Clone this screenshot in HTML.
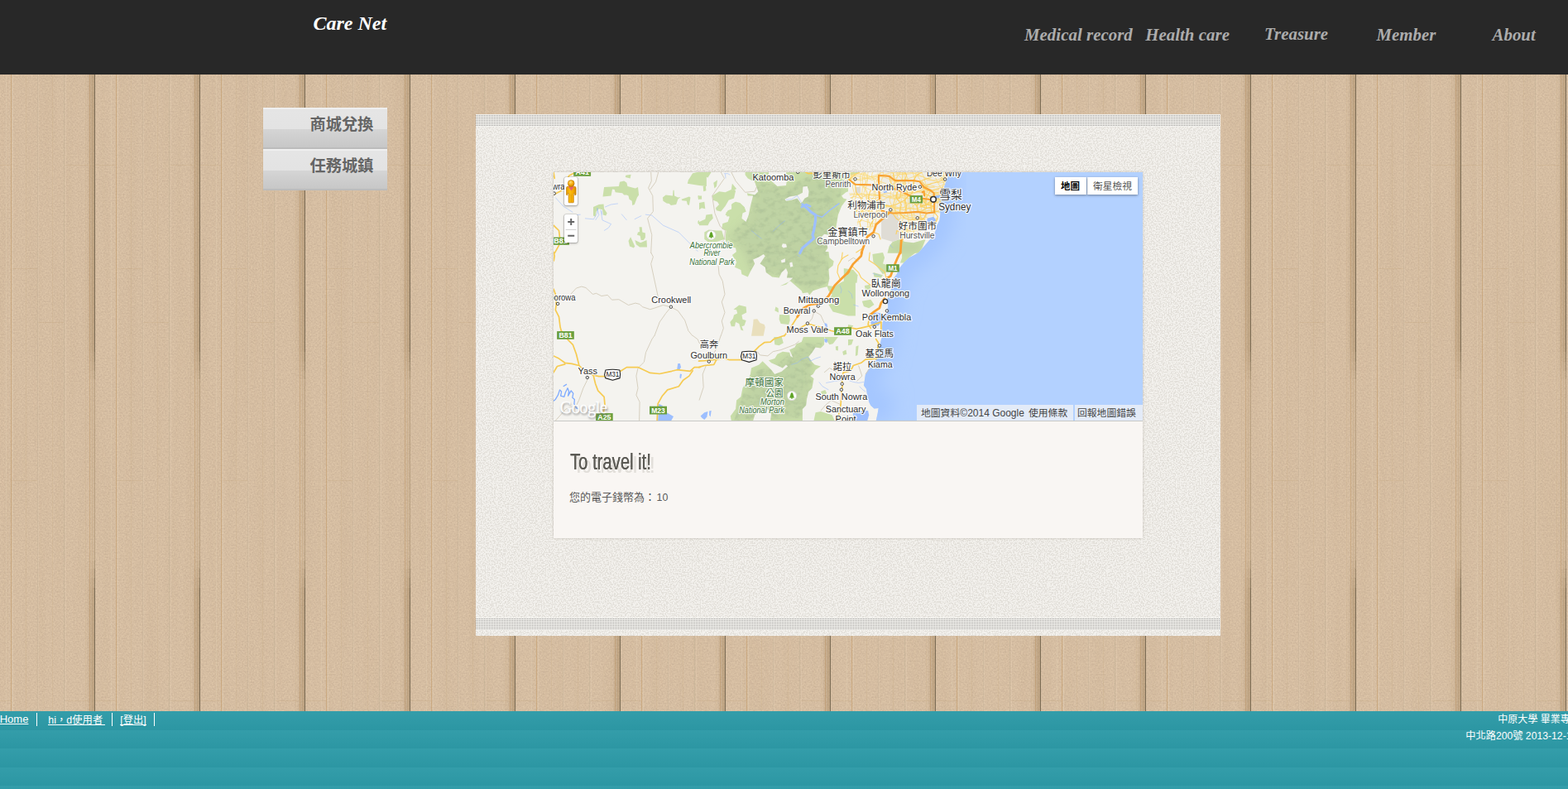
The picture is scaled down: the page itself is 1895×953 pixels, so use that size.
<!DOCTYPE html>
<html lang="zh-Hant">
<head>
<meta charset="utf-8">
<title>Care Net</title>
<style>
*{box-sizing:border-box}
html,body{margin:0;padding:0}
body{width:1895px;height:953px;overflow:hidden;position:relative;background:#d5bea3;font-family:"Liberation Sans",sans-serif;font-size:13px;color:#555}
svg{display:block}
a{color:inherit}
#wood{position:absolute;left:0;top:0;width:1895px;height:953px;z-index:0}
#header{position:absolute;left:0;top:0;width:1895px;height:90px;background:#282828;z-index:2}
#logo{position:absolute;left:378.4px;top:11.7px;margin:0;font:italic bold 24px/32px "Liberation Serif",serif;color:#fff;white-space:nowrap}
#nav a{position:absolute;font:italic bold 20.8px/26px "Liberation Serif",serif;letter-spacing:.06px;color:#acacac;text-decoration:none;white-space:nowrap}
#side{position:absolute;left:318px;top:130px;width:150px;z-index:2;margin:0;padding:0;list-style:none}
#side li{position:relative;height:50px;width:150px;border-top:2px solid #efefef;border-bottom:2px solid #bcbcbc;
 background:linear-gradient(to bottom,#e5e5e5 0,#e3e3e3 24px,#d5d5d5 24px,#c7c7c7 46px)}
#side li svg{position:absolute;left:56px;top:6px}
#panel{position:absolute;left:575px;top:138px;width:900px;height:630px;background:#eeece7;z-index:1;overflow:hidden}
#panel .tex{position:absolute;left:0;top:0}
.dots{position:absolute;left:0;width:900px;height:15px;background-color:#f3f2ee;
 background-image:linear-gradient(90deg,#979593 1px,#f3f2ee 1px),linear-gradient(#f3f2ee,#f3f2ee);background-size:2px 2px,2px 2px}
.dots i{position:absolute;left:0;top:0;width:900px;height:15px;background-image:linear-gradient(#f3f2ee 1px,transparent 1px);background-size:2px 2px;background-position:0 0}
#card{position:absolute;left:669px;top:208px;width:712px;height:442px;background:#f9f6f3;z-index:3;box-shadow:0 0 3px rgba(90,80,60,.28)}
#map{position:relative;width:712px;height:300px;overflow:hidden;border-bottom:1px solid #c9c9c6;box-sizing:content-box;background:#f4f3ef}
.gm{position:absolute;background:#fff;border-radius:2px;box-shadow:0 1px 3px rgba(0,0,0,.3),0 0 0 .6px rgba(0,0,0,.18)}
#mt{position:absolute;left:606px;top:6px;height:21px;display:flex}
#mt div{height:21px;background:#fff;box-shadow:0 1px 3px rgba(0,0,0,.4);position:relative}
#mt svg{position:absolute;top:4px}
.cr{position:absolute;top:281px;height:19px;background:rgba(245,245,245,.72)}
.cr svg{position:absolute;top:3px}
.cr span{position:absolute;top:3px;font-size:12px;line-height:14px;color:#444;white-space:nowrap}
#card h2{position:absolute;left:20.4px;top:334.4px;margin:0;font:normal 27px/32px "Liberation Sans",sans-serif;color:#5b5a54;white-space:nowrap;transform:scaleX(.749);transform-origin:0 0;text-shadow:.3px 0 0 #56554f,5.5px 4px 0 #e2dfda,6px 4px 0 #e2dfda;letter-spacing:0}
#coin{position:absolute;left:19px;top:383px;margin:0;height:18px;white-space:nowrap}
#footer{position:absolute;left:0;top:859px;width:1895px;height:94px;z-index:2;color:#fff;
 background:#2d9aa7;background-image:repeating-linear-gradient(to bottom,rgba(255,255,255,.03) 0,rgba(0,0,0,.025) 22.5px)}
#footer .l{position:absolute;top:2px;height:16px;white-space:nowrap;font-size:13px;line-height:16px;color:#fff;text-decoration:underline}
#footer .sep{position:absolute;top:2px;width:1px;height:16px;background:#fff}
#footer .r{position:absolute;white-space:nowrap;height:16px}
</style>
</head>
<body>

<svg id="wood" width="1895" height="953" viewBox="0 0 1895 953" aria-hidden="true">
<defs>
<filter id="wg" x="0" y="0" width="100%" height="100%" color-interpolation-filters="sRGB"><feTurbulence type="fractalNoise" baseFrequency="0.55" numOctaves="2" seed="7"/><feColorMatrix type="matrix" values="0.12 0 0 0 0.777  0.12 0 0 0 0.683  0.10 0 0 0 0.584  0 0 0 0 1"/></filter>
<filter id="ws" x="0" y="0" width="100%" height="100%" color-interpolation-filters="sRGB"><feTurbulence type="fractalNoise" baseFrequency="0.09 0.004" numOctaves="2" seed="3"/><feColorMatrix type="matrix" values="0 0 0 0 0.50  0 0 0 0 0.36  0 0 0 0 0.20  0 0 0 1.0 -0.42"/></filter>
<linearGradient id="sh" x1="0" y1="0" x2="1" y2="0"><stop offset="0" stop-color="#7f6138" stop-opacity="0"/><stop offset="1" stop-color="#7f6138" stop-opacity=".24"/></linearGradient>
<linearGradient id="shr" x1="0" y1="0" x2="1" y2="0"><stop offset="0" stop-color="#7f6138" stop-opacity=".14"/><stop offset="1" stop-color="#7f6138" stop-opacity="0"/></linearGradient>
<linearGradient id="sh2" x1="0" y1="0" x2="1" y2="0"><stop offset="0" stop-color="#8a6a3c" stop-opacity="0"/><stop offset="1" stop-color="#8a6a3c" stop-opacity=".10"/></linearGradient>
<pattern id="pl" width="127" height="953" patternUnits="userSpaceOnUse" x="-12" y="0">
 <rect x="19" y="0" width="1" height="953" fill="#ead8be" fill-opacity="0.22"/>
 <rect x="25" y="0" width="1" height="953" fill="#c39a68" fill-opacity="0.55"/>
 <rect x="27" y="0" width="1" height="953" fill="#ead8be" fill-opacity="0.3"/>
 <rect x="43" y="0" width="1" height="953" fill="#c7aa84" fill-opacity="0.25"/>
 <rect x="57" y="0" width="1" height="953" fill="#bfae94" fill-opacity="0.35"/>
 <rect x="58" y="0" width="1" height="953" fill="#ead8be" fill-opacity="0.2"/>
 <rect x="75" y="0" width="1" height="953" fill="#c7aa84" fill-opacity="0.25"/>
 <rect x="89" y="0" width="1" height="953" fill="#bfae94" fill-opacity="0.4"/>
 <rect x="91" y="0" width="1" height="953" fill="#ead8be" fill-opacity="0.25"/>
 <rect x="115" y="0" width="1" height="953" fill="#c7aa84" fill-opacity="0.25"/>
 <rect x="120" y="0" width="1" height="953" fill="#c39a68" fill-opacity="0.45"/>
 <rect x="123" y="0" width="1" height="953" fill="#cdb08a" fill-opacity="0.4"/>
 <rect x="117" y="0" width="10" height="953" fill="url(#sh2)"/>
 <rect x="126" y="0" width="1" height="953" fill="#a89070" fill-opacity="0.5"/>
 <rect x="116" y="0" width="10" height="425" fill="url(#sh)" opacity="1"/>
 <rect x="127" y="0" width="5" height="425" fill="url(#shr)" opacity="1"/>
 <rect x="126" y="0" width="1" height="425" fill="#6b5f48" fill-opacity="0.8"/>
 <rect x="116" y="425" width="10" height="12" fill="url(#sh)" opacity="0.75"/>
 <rect x="127" y="425" width="5" height="12" fill="url(#shr)" opacity="0.75"/>
 <rect x="126" y="425" width="1" height="12" fill="#6b5f48" fill-opacity="0.6"/>
 <rect x="116" y="437" width="10" height="11" fill="url(#sh)" opacity="0.5"/>
 <rect x="127" y="437" width="5" height="11" fill="url(#shr)" opacity="0.5"/>
 <rect x="126" y="437" width="1" height="11" fill="#6b5f48" fill-opacity="0.4"/>
 <rect x="116" y="448" width="10" height="10" fill="url(#sh)" opacity="0.25"/>
 <rect x="127" y="448" width="5" height="10" fill="url(#shr)" opacity="0.25"/>
 <rect x="126" y="448" width="1" height="10" fill="#6b5f48" fill-opacity="0.2"/>
 <rect x="116" y="677" width="10" height="10" fill="url(#sh)" opacity="0.25"/>
 <rect x="127" y="677" width="5" height="10" fill="url(#shr)" opacity="0.25"/>
 <rect x="126" y="677" width="1" height="10" fill="#6b5f48" fill-opacity="0.2"/>
 <rect x="116" y="687" width="10" height="11" fill="url(#sh)" opacity="0.5"/>
 <rect x="127" y="687" width="5" height="11" fill="url(#shr)" opacity="0.5"/>
 <rect x="126" y="687" width="1" height="11" fill="#6b5f48" fill-opacity="0.4"/>
 <rect x="116" y="698" width="10" height="12" fill="url(#sh)" opacity="0.75"/>
 <rect x="127" y="698" width="5" height="12" fill="url(#shr)" opacity="0.75"/>
 <rect x="126" y="698" width="1" height="12" fill="#6b5f48" fill-opacity="0.6"/>
 <rect x="116" y="710" width="10" height="243" fill="url(#sh)" opacity="1"/>
 <rect x="127" y="710" width="5" height="243" fill="url(#shr)" opacity="1"/>
 <rect x="126" y="710" width="1" height="243" fill="#6b5f48" fill-opacity="0.8"/>
 <rect x="0" y="199" width="25" height="1" fill="#c4a67e" fill-opacity="0.3"/>
 <rect x="91" y="199" width="28" height="1" fill="#c4a67e" fill-opacity="0.3"/>
 <rect x="27" y="324" width="30" height="1" fill="#c4a67e" fill-opacity="0.3"/>
 <rect x="58" y="389" width="31" height="1" fill="#c4a67e" fill-opacity="0.3"/>
 <rect x="27" y="580" width="30" height="1" fill="#c4a67e" fill-opacity="0.3"/>
 <rect x="0" y="846" width="25" height="1" fill="#c4a67e" fill-opacity="0.3"/>
 <rect x="91" y="846" width="28" height="1" fill="#c4a67e" fill-opacity="0.3"/>
</pattern></defs>
<rect x="0" y="80" width="1895" height="790" filter="url(#wg)"/>
<rect x="0" y="80" width="1895" height="790" filter="url(#ws)" opacity=".07"/>
<rect x="0" y="80" width="1895" height="790" fill="url(#pl)"/>
</svg>
<div id="header"><h1 id="logo">Care Net</h1><div id="nav">
<a href="#" style="left:1238px;top:29.1px">Medical record</a>
<a href="#" style="left:1384.2px;top:29.1px">Health care</a>
<a href="#" style="left:1528px;top:28.1px">Treasure</a>
<a href="#" style="left:1663.5px;top:29.2px">Member</a>
<a href="#" style="left:1803.5px;top:29.1px">About</a>
</div></div>
<ul id="side">
<li><svg class="" width="80" height="26" viewBox="0 0 80 26" role="img" aria-label="商城兌換"><title>商城兌換</title><text x="0.5" y="18.8" font-family="'Liberation Sans','Noto Sans CJK TC',sans-serif" font-size="19.2" font-weight="bold" fill="#656565" textLength="76.8" lengthAdjust="spacingAndGlyphs">商城兌換</text></svg></li>
<li><svg class="" width="80" height="26" viewBox="0 0 80 26" role="img" aria-label="任務城鎮"><title>任務城鎮</title><text x="0.5" y="18.8" font-family="'Liberation Sans','Noto Sans CJK TC',sans-serif" font-size="19.2" font-weight="bold" fill="#656565" textLength="76.8" lengthAdjust="spacingAndGlyphs">任務城鎮</text></svg></li>
</ul>
<div id="panel">
<svg class="tex" width="900" height="630" aria-hidden="true"><defs><filter id="pn" x="0" y="0" width="100%" height="100%" color-interpolation-filters="sRGB"><feTurbulence type="fractalNoise" baseFrequency="0.62" numOctaves="1" seed="5"/><feColorMatrix type="matrix" values="0 0 0 0 0.890  0 0 0 0 0.878  0 0 0 0 0.855  0 0 0 9 -4.15"/></filter></defs>
<rect width="900" height="630" fill="#f3f1ed"/><rect width="900" height="630" filter="url(#pn)"/></svg>
<div class="dots" style="top:0"><i></i></div>
<div class="dots" style="top:608px"><i></i></div>
</div>
<div id="card"><div id="map">
<svg class="mapsvg" width="712" height="300" viewBox="0 0 712 300" role="img" aria-label="Google map of the Sydney region, New South Wales">
<defs><clipPath id="mc"><rect width="712" height="300"/></clipPath>
<clipPath id="sc"><path d="M478 -0.4 L475.9 7.5 L472.7 15.9 L470.7 24.3 L467.5 31.6 L465.4 39 L467.5 49.5 L466.5 57.9 L463.3 64.2 L461.2 72.6 L456 79.9 L450.7 86.2 L444.4 93.6 L441.3 97 L433.7 101.2 L429.5 103.3 L423.2 109.6 L417.9 115.9 L414.8 123.2 L410.6 128.5 L408.5 141.1 L405.3 146.3 L403.2 155.8 L404.3 162.1 L402.2 170.5 L398 178.9 L396.9 187.3 L398 197 L395.9 202 L394.8 208.3 L391.7 213.5 L390.6 225.1 L383.3 233.5 L380.1 238.7 L377 244 L375.9 251.3 L374.9 257.6 L378 261.8 L379.1 269.2 L381.2 277.6 L383.3 281.8 L387.5 285.4 L392.7 284.9 L391.7 291.2 L389.6 300.7 L389.6 320 L760 320 L760 -20 L478 -20Z"/></clipPath>
<filter id="bl" x="-20%" y="-20%" width="140%" height="140%"><feGaussianBlur stdDeviation="11"/></filter>
<filter id="hs" x="-20%" y="-20%" width="140%" height="140%"><feGaussianBlur stdDeviation="5"/></filter><filter id="ht" x="0" y="0" width="100%" height="100%" color-interpolation-filters="sRGB"><feTurbulence type="fractalNoise" baseFrequency="0.11 0.16" numOctaves="3" seed="9" result="n"/><feColorMatrix in="n" type="matrix" values="0 0 0 0 0  0 0 0 0 0  0 0 0 0 0  3.2 0 0 0 -1.45" result="m"/><feComposite in="SourceGraphic" in2="m" operator="in"/><feGaussianBlur stdDeviation="0.6"/></filter>
<filter id="gsh" x="-10%" y="-10%" width="130%" height="140%"><feGaussianBlur stdDeviation="0.9"/></filter>
</defs>
<g clip-path="url(#mc)">
<rect width="712" height="300" fill="#f4f3ef"/>
<path d="M390.9 -0.1 L476.9 -0.1 L466.5 49.5 L449.7 55.8 L424.5 62.1 L405.6 51.6 L390.9 47.4Z" fill="#efede6"/>
<g fill="#cadfaa">
<path d="M61.1 18 L78.9 16.9 L80 11.7 L85.2 10.6 L88.4 12.7 L89.4 16.9 L98.9 19.6 L102 18 L103.1 27.4 L101 30.6 L97.8 39 L95.2 40 L94.7 34.8 L91.5 32.7 L90.5 28.5 L88.4 27.4 L85.2 27.4 L83.1 25.3 L74.7 24.3 L73.7 21.1 L71 20.6 L69.5 28.5 L59.5 29.5Z"/>
<path d="M87.3 3.8 L93.6 2.8 L92.6 7.5 L86.8 5.9Z"/>
<path d="M131.9 30.6 L135.6 27.4 L144 28.5 L144.5 21.7 L145.6 21.7 L146.1 28.5 L150.3 30.6 L153.4 30.1 L150.3 32.7 L148.2 39 L141.9 40 L139.8 37.9 L136.6 37.4 L132.4 34.8Z"/>
<path d="M154.5 32.7 L163.9 29.5 L165.5 30.6 L163.9 40 L161.8 39 L160.8 34.8 L155.5 34.3Z"/>
<path d="M162.9 9.6 L168.1 1.2 L173.4 0.1 L176 -0.1 L184.9 -0.1 L184.9 16.9 L176 15.9 L168.1 14.8 L161.8 13.8Z"/>
<path d="M48 42.1 L54.8 39 L60.5 38.5 L61.1 44.2 L64.7 49.5 L63.2 52.6 L60 51.6 L59 45.3 L54.8 44.2 L51.6 47.4 L50.6 53.7 L48 52.6Z"/>
<path d="M103.6 66.3 L106.7 66.3 L107.3 72.6 L110.9 73.6 L110.9 78.9 L108.8 82 L105.7 82 L104.6 76.8 L101 75.7 L102 72.6 L104.1 72Z"/>
<path d="M93.1 78.3 L98.3 89.4 L96.8 91.5 L92 89.4 L90.5 83.1Z"/>
<path d="M98.3 82 L105.2 85.2 L112.5 82 L113 90.4 L104.1 90.4 L99.9 87.3Z"/>
<path d="M174.4 28.5 L176 28 L176 32.7 L175 33.2Z"/>
<path d="M174.4 58.9 L176 57.9 L176 63.1 L174.4 62.1Z"/>
<path d="M176 1.2 L182.3 -0.1 L190.7 -0.1 L186.5 6.4 L180.2 4.3 L182.3 8.5 L176 7.5Z"/>
<path d="M193.3 12.7 L198 9.6 L197 16.9 L194.4 19.6Z"/>
<path d="M180.7 16.9 L183.9 15.9 L184.4 22.2 L181.2 23.2Z"/>
<path d="M215.9 13.8 L221.1 20.1 L218 22.2 L214.8 21.1Z"/>
<path d="M191.7 28.5 L200.1 23.2 L207.5 24.3 L214.8 21.1 L220.1 22.2 L218 31.6 L211.7 33.7 L207.5 41.1 L202.2 47.4 L197 46.3 L195.9 43.2 L200.1 39 L198 35.8 L192.8 33.7Z"/>
<path d="M176 28.5 L179.1 28.5 L179.1 32.7 L176 32.7Z"/>
<path d="M176 36.9 L182.3 35.8 L183.3 44.2 L179.1 43.2 L176 45.3Z"/>
<path d="M215.9 37.9 L220.1 35.8 L222.2 41.1 L230.6 42.1 L230.6 47.4 L225.3 48.4 L223.2 55.8 L219 55.8 L215.9 51.6 L209.6 53.7 L208.5 48.4 L214.8 46.3Z"/>
<path d="M176 60 L183.3 56.8 L184.4 51.6 L191.7 50.5 L192.8 55.8 L188.6 60 L186.5 64.2 L176 64.2Z"/>
<path d="M182.3 72.6 L187.5 69.4 L197 70.5 L203.3 70.5 L206.4 81 L197 84.1 L186.5 84.1 L182.3 81Z"/>
<path d="M231.6 -0.1 L260 -0.1 L260 3.3 L263.1 10.6 L270.5 16.9 L281 15.9 L282 9.6 L281 -0.1 L356 -0.1 L356 23.2 L353.4 24.3 L348.1 28.5 L350.2 31.6 L354.4 32.7 L348.1 41.1 L343.9 51.6 L341.8 64.2 L339.7 76.8 L327.1 74.7 L322.9 78.9 L329.2 81 L331.3 91.5 L327.1 97.8 L221.1 97.8 L220.1 91.5 L210.6 89.4 L207.5 81 L208.5 70.5 L203.3 68.4 L204.3 62.1 L210.6 60 L212.7 53.7 L207.5 51.6 L210.6 46.3 L215.9 44.2 L214.8 39 L220.1 35.8 L225.3 36.9 L230.6 42.1 L232.7 47.4 L228.5 49.5 L227.4 55.8 L232.7 60 L235.8 51.6 L237.9 41.1 L241.1 28.5 L234.8 28.5 L233.7 25.3 L239 26.4 L243.2 27.4 L247.4 23.2 L245.3 18 L243.2 11.7 L234.8 7.5 L231.6 3.3Z"/>
<path d="M221.1 96 L215.9 100.1 L221.1 108.5 L219 114.8 L226.4 118 L227.4 123.2 L234.8 126.4 L237.9 120.1 L243.2 110.6 L241.1 105.4 L248.4 102.2 L253.7 99.1 L255.8 101.2 L249.5 110.6 L255.8 114.8 L256.8 121.1 L264.2 126.4 L272.6 127.4 L275.7 121.1 L281 115.9 L283.1 121.1 L282 127.4 L289.4 127.4 L281 135.8 L273.6 137.4 L286.2 131.6 L292.5 136.9 L299.8 143.2 L300.9 146.3 L307.2 145.3 L309.3 148.4 L313.5 143.2 L322.9 140 L331.3 137.9 L333.4 128.5 L332.4 116.9 L337.6 112.7 L338.7 107.5 L333.4 103.3 L332.4 96Z"/>
<path d="M356 129.5 L348.1 132.7 L339.7 137.9 L330.3 136.9 L332.4 143.2 L336.6 147.4 L333.4 153.7 L343.9 154.2 L332.4 160 L337.6 168.4 L356 173.6 L364.9 173.6 L364.9 129.5Z"/>
<path d="M224.3 160.5 L232.7 162.6 L233.2 169.4 L227.4 172.6 L228.5 177.8 L232.7 178.9 L230.6 185.2 L227.4 186.2 L229.5 191.5 L226.4 190.4 L224.3 183.1 L220.1 181 L219 186.2 L214.8 186.2 L213.3 181 L216.9 176.8 L218 172.6 L222.2 170.5 L221.1 166.3 L217.5 165.7Z"/>
<path d="M268.4 162.6 L271.5 164.2 L272 169.4 L267.3 167.3Z"/>
<path d="M273.1 172 L285.2 172.6 L285.7 178.9 L284.1 184.1 L274.7 183.1 L272.6 177.8Z"/>
<path d="M409.8 84.1 L418.2 81 L424.5 84.1 L435 85.2 L449.7 81 L445.5 91.5 L441.3 97.8 L403.5 97.8 L405.6 89.4Z"/>
<path d="M351 -3 L369.9 -0.1 L361.5 3.3 L351 4.3Z"/>
<path d="M385.4 99.1 L398 97 L400.1 103.3 L398 110.6 L402.2 111.7 L402.2 121.1 L398 123.2 L390.6 113.8 L386.4 108.5Z"/>
<path d="M421.1 97 L437.9 97 L429.5 103.3 L423.2 109.6 L419 109.6 L421.1 103.3Z"/>
<path d="M350.8 115.9 L362.3 118 L367.5 124.3 L366.5 133.7 L350.8 132.7Z"/>
<path d="M375.9 136.9 L382.2 135.8 L383.3 141.1 L377 143.2Z"/>
<path d="M386.4 121.1 L398 124.3 L395.9 127.4 L387.5 126.4Z"/>
<path d="M356 184.1 L362.3 185.2 L359.1 189.4 L356 188.3Z"/>
<path d="M372.8 155.8 L383.3 153.7 L387.5 160 L381.2 164.2 L374.9 162.1Z"/>
<path d="M356 160 L360.2 155.8 L364.4 164.2 L359.1 170.5 L356 169.4Z"/>
<path d="M214.8 300.1 L213.8 294.4 L220.1 286 L221.1 275.5 L226.4 271.3 L228.5 260.8 L234.8 251.3 L237.9 244 L239 236.6 L248.4 232.4 L252.6 228.2 L257.9 233.5 L263.1 238.7 L267.3 244 L275.7 240.8 L283.1 234.5 L281 232.4 L276.8 236.6 L270.5 233.5 L263.1 230.3 L260 227.2 L267.3 225.1 L270.5 219.8 L276.8 216.7 L285.2 217.7 L286.2 221.9 L289.4 224 L285.2 214.6 L291.5 211.4 L293.6 207.2 L299.8 205.1 L301.9 198.9 L327.1 198.9 L327.1 208.3 L322.9 212.5 L316.6 211.4 L312.4 217.7 L308.2 223 L312.4 229.3 L315.6 232.4 L322.9 234.5 L316.6 238.7 L313.5 244 L310.3 246.1 L314.5 249.2 L312.4 260.8 L308.2 265 L306.1 273.4 L305.1 281.8 L300.9 286 L300.9 300.1 L262.1 300.1 L263.1 292.3 L258.9 286 L249.5 288.1 L243.2 293.3 L241.1 300.1Z"/>
<path d="M266.3 198.9 L275.7 198.9 L277.8 206.2 L272.6 209.3 L267.3 208.3Z"/>
<path d="M327.1 198.9 L333.4 208.3 L337.6 207.2 L343.9 198.9Z"/>
<path d="M340.8 210.4 L343.9 209.9 L343.9 215.6 L341.3 215.1Z"/>
<path d="M316.6 290.2 L322.9 289.1 L336.6 293.3 L339.7 300.1 L314.5 300.1Z"/>
<path d="M322.9 265 L328.2 262.9 L330.3 267.1 L325 270.2Z"/>
<path d="M349.2 216.7 L353.4 214.6 L354.4 219.8 L350.2 220.9Z"/>
<path d="M365.4 210.4 L368.6 209.3 L367.5 220.9 L364.9 221.9Z"/>
<path d="M356 202 L362.3 202 L360.2 208.3 L356 209.3Z"/>
</g>
<clipPath id="gc">
<path d="M61.1 18 L78.9 16.9 L80 11.7 L85.2 10.6 L88.4 12.7 L89.4 16.9 L98.9 19.6 L102 18 L103.1 27.4 L101 30.6 L97.8 39 L95.2 40 L94.7 34.8 L91.5 32.7 L90.5 28.5 L88.4 27.4 L85.2 27.4 L83.1 25.3 L74.7 24.3 L73.7 21.1 L71 20.6 L69.5 28.5 L59.5 29.5Z"/>
<path d="M87.3 3.8 L93.6 2.8 L92.6 7.5 L86.8 5.9Z"/>
<path d="M131.9 30.6 L135.6 27.4 L144 28.5 L144.5 21.7 L145.6 21.7 L146.1 28.5 L150.3 30.6 L153.4 30.1 L150.3 32.7 L148.2 39 L141.9 40 L139.8 37.9 L136.6 37.4 L132.4 34.8Z"/>
<path d="M154.5 32.7 L163.9 29.5 L165.5 30.6 L163.9 40 L161.8 39 L160.8 34.8 L155.5 34.3Z"/>
<path d="M162.9 9.6 L168.1 1.2 L173.4 0.1 L176 -0.1 L184.9 -0.1 L184.9 16.9 L176 15.9 L168.1 14.8 L161.8 13.8Z"/>
<path d="M48 42.1 L54.8 39 L60.5 38.5 L61.1 44.2 L64.7 49.5 L63.2 52.6 L60 51.6 L59 45.3 L54.8 44.2 L51.6 47.4 L50.6 53.7 L48 52.6Z"/>
<path d="M103.6 66.3 L106.7 66.3 L107.3 72.6 L110.9 73.6 L110.9 78.9 L108.8 82 L105.7 82 L104.6 76.8 L101 75.7 L102 72.6 L104.1 72Z"/>
<path d="M93.1 78.3 L98.3 89.4 L96.8 91.5 L92 89.4 L90.5 83.1Z"/>
<path d="M98.3 82 L105.2 85.2 L112.5 82 L113 90.4 L104.1 90.4 L99.9 87.3Z"/>
<path d="M174.4 28.5 L176 28 L176 32.7 L175 33.2Z"/>
<path d="M174.4 58.9 L176 57.9 L176 63.1 L174.4 62.1Z"/>
<path d="M176 1.2 L182.3 -0.1 L190.7 -0.1 L186.5 6.4 L180.2 4.3 L182.3 8.5 L176 7.5Z"/>
<path d="M193.3 12.7 L198 9.6 L197 16.9 L194.4 19.6Z"/>
<path d="M180.7 16.9 L183.9 15.9 L184.4 22.2 L181.2 23.2Z"/>
<path d="M215.9 13.8 L221.1 20.1 L218 22.2 L214.8 21.1Z"/>
<path d="M191.7 28.5 L200.1 23.2 L207.5 24.3 L214.8 21.1 L220.1 22.2 L218 31.6 L211.7 33.7 L207.5 41.1 L202.2 47.4 L197 46.3 L195.9 43.2 L200.1 39 L198 35.8 L192.8 33.7Z"/>
<path d="M176 28.5 L179.1 28.5 L179.1 32.7 L176 32.7Z"/>
<path d="M176 36.9 L182.3 35.8 L183.3 44.2 L179.1 43.2 L176 45.3Z"/>
<path d="M215.9 37.9 L220.1 35.8 L222.2 41.1 L230.6 42.1 L230.6 47.4 L225.3 48.4 L223.2 55.8 L219 55.8 L215.9 51.6 L209.6 53.7 L208.5 48.4 L214.8 46.3Z"/>
<path d="M176 60 L183.3 56.8 L184.4 51.6 L191.7 50.5 L192.8 55.8 L188.6 60 L186.5 64.2 L176 64.2Z"/>
<path d="M182.3 72.6 L187.5 69.4 L197 70.5 L203.3 70.5 L206.4 81 L197 84.1 L186.5 84.1 L182.3 81Z"/>
<path d="M231.6 -0.1 L260 -0.1 L260 3.3 L263.1 10.6 L270.5 16.9 L281 15.9 L282 9.6 L281 -0.1 L356 -0.1 L356 23.2 L353.4 24.3 L348.1 28.5 L350.2 31.6 L354.4 32.7 L348.1 41.1 L343.9 51.6 L341.8 64.2 L339.7 76.8 L327.1 74.7 L322.9 78.9 L329.2 81 L331.3 91.5 L327.1 97.8 L221.1 97.8 L220.1 91.5 L210.6 89.4 L207.5 81 L208.5 70.5 L203.3 68.4 L204.3 62.1 L210.6 60 L212.7 53.7 L207.5 51.6 L210.6 46.3 L215.9 44.2 L214.8 39 L220.1 35.8 L225.3 36.9 L230.6 42.1 L232.7 47.4 L228.5 49.5 L227.4 55.8 L232.7 60 L235.8 51.6 L237.9 41.1 L241.1 28.5 L234.8 28.5 L233.7 25.3 L239 26.4 L243.2 27.4 L247.4 23.2 L245.3 18 L243.2 11.7 L234.8 7.5 L231.6 3.3Z"/>
<path d="M221.1 96 L215.9 100.1 L221.1 108.5 L219 114.8 L226.4 118 L227.4 123.2 L234.8 126.4 L237.9 120.1 L243.2 110.6 L241.1 105.4 L248.4 102.2 L253.7 99.1 L255.8 101.2 L249.5 110.6 L255.8 114.8 L256.8 121.1 L264.2 126.4 L272.6 127.4 L275.7 121.1 L281 115.9 L283.1 121.1 L282 127.4 L289.4 127.4 L281 135.8 L273.6 137.4 L286.2 131.6 L292.5 136.9 L299.8 143.2 L300.9 146.3 L307.2 145.3 L309.3 148.4 L313.5 143.2 L322.9 140 L331.3 137.9 L333.4 128.5 L332.4 116.9 L337.6 112.7 L338.7 107.5 L333.4 103.3 L332.4 96Z"/>
<path d="M356 129.5 L348.1 132.7 L339.7 137.9 L330.3 136.9 L332.4 143.2 L336.6 147.4 L333.4 153.7 L343.9 154.2 L332.4 160 L337.6 168.4 L356 173.6 L364.9 173.6 L364.9 129.5Z"/>
<path d="M224.3 160.5 L232.7 162.6 L233.2 169.4 L227.4 172.6 L228.5 177.8 L232.7 178.9 L230.6 185.2 L227.4 186.2 L229.5 191.5 L226.4 190.4 L224.3 183.1 L220.1 181 L219 186.2 L214.8 186.2 L213.3 181 L216.9 176.8 L218 172.6 L222.2 170.5 L221.1 166.3 L217.5 165.7Z"/>
<path d="M268.4 162.6 L271.5 164.2 L272 169.4 L267.3 167.3Z"/>
<path d="M273.1 172 L285.2 172.6 L285.7 178.9 L284.1 184.1 L274.7 183.1 L272.6 177.8Z"/>
<path d="M409.8 84.1 L418.2 81 L424.5 84.1 L435 85.2 L449.7 81 L445.5 91.5 L441.3 97.8 L403.5 97.8 L405.6 89.4Z"/>
<path d="M351 -3 L369.9 -0.1 L361.5 3.3 L351 4.3Z"/>
<path d="M385.4 99.1 L398 97 L400.1 103.3 L398 110.6 L402.2 111.7 L402.2 121.1 L398 123.2 L390.6 113.8 L386.4 108.5Z"/>
<path d="M421.1 97 L437.9 97 L429.5 103.3 L423.2 109.6 L419 109.6 L421.1 103.3Z"/>
<path d="M350.8 115.9 L362.3 118 L367.5 124.3 L366.5 133.7 L350.8 132.7Z"/>
<path d="M375.9 136.9 L382.2 135.8 L383.3 141.1 L377 143.2Z"/>
<path d="M386.4 121.1 L398 124.3 L395.9 127.4 L387.5 126.4Z"/>
<path d="M356 184.1 L362.3 185.2 L359.1 189.4 L356 188.3Z"/>
<path d="M372.8 155.8 L383.3 153.7 L387.5 160 L381.2 164.2 L374.9 162.1Z"/>
<path d="M356 160 L360.2 155.8 L364.4 164.2 L359.1 170.5 L356 169.4Z"/>
<path d="M214.8 300.1 L213.8 294.4 L220.1 286 L221.1 275.5 L226.4 271.3 L228.5 260.8 L234.8 251.3 L237.9 244 L239 236.6 L248.4 232.4 L252.6 228.2 L257.9 233.5 L263.1 238.7 L267.3 244 L275.7 240.8 L283.1 234.5 L281 232.4 L276.8 236.6 L270.5 233.5 L263.1 230.3 L260 227.2 L267.3 225.1 L270.5 219.8 L276.8 216.7 L285.2 217.7 L286.2 221.9 L289.4 224 L285.2 214.6 L291.5 211.4 L293.6 207.2 L299.8 205.1 L301.9 198.9 L327.1 198.9 L327.1 208.3 L322.9 212.5 L316.6 211.4 L312.4 217.7 L308.2 223 L312.4 229.3 L315.6 232.4 L322.9 234.5 L316.6 238.7 L313.5 244 L310.3 246.1 L314.5 249.2 L312.4 260.8 L308.2 265 L306.1 273.4 L305.1 281.8 L300.9 286 L300.9 300.1 L262.1 300.1 L263.1 292.3 L258.9 286 L249.5 288.1 L243.2 293.3 L241.1 300.1Z"/>
<path d="M266.3 198.9 L275.7 198.9 L277.8 206.2 L272.6 209.3 L267.3 208.3Z"/>
<path d="M327.1 198.9 L333.4 208.3 L337.6 207.2 L343.9 198.9Z"/>
<path d="M340.8 210.4 L343.9 209.9 L343.9 215.6 L341.3 215.1Z"/>
<path d="M316.6 290.2 L322.9 289.1 L336.6 293.3 L339.7 300.1 L314.5 300.1Z"/>
<path d="M322.9 265 L328.2 262.9 L330.3 267.1 L325 270.2Z"/>
<path d="M349.2 216.7 L353.4 214.6 L354.4 219.8 L350.2 220.9Z"/>
<path d="M365.4 210.4 L368.6 209.3 L367.5 220.9 L364.9 221.9Z"/>
<path d="M356 202 L362.3 202 L360.2 208.3 L356 209.3Z"/>
</clipPath>
<g clip-path="url(#gc)">
<g fill="#95a78d" fill-opacity=".2" filter="url(#hs)">
<path d="M239 9.6 L281 18 L312.4 3.3 L349.2 9.6 L343.9 49.5 L333.4 95.7 L270.5 97.8 L228.5 95.7 L210.6 76.8 L234.8 55.8 L241.1 31.6Z"/>
<path d="M228.5 94.9 L331.3 94.9 L333.4 131.6 L310.3 145.3 L286.2 130.6 L268.4 124.3 L239 122.2Z"/>
<path d="M239 241.9 L270.5 231.4 L301.9 206.2 L325 206.2 L312.4 233.5 L312.4 260.8 L303 296.5 L218 300.7 L226.4 275.5Z"/>
<path d="M409.8 85.2 L445.5 83.1 L441.3 97.8 L405.6 97.8Z"/>
</g>
<g fill="#8a9f82" fill-opacity=".24" filter="url(#ht)">
<path d="M239 9.6 L281 18 L312.4 3.3 L349.2 9.6 L343.9 49.5 L333.4 95.7 L270.5 97.8 L228.5 95.7 L210.6 76.8 L234.8 55.8 L241.1 31.6Z"/>
<path d="M228.5 94.9 L331.3 94.9 L333.4 131.6 L310.3 145.3 L286.2 130.6 L268.4 124.3 L239 122.2Z"/>
<path d="M239 241.9 L270.5 231.4 L301.9 206.2 L325 206.2 L312.4 233.5 L312.4 260.8 L303 296.5 L218 300.7 L226.4 275.5Z"/>
</g>
</g>
<g fill="#f4f3ef">
<path d="M279.4 32.7 L285.2 29.5 L294.6 28 L300.9 24.8 L301.4 17.5 L306.7 16.9 L308.5 23.2 L307.7 29.5 L303.5 31.6 L300.9 35.8 L298.8 37.4 L294.6 31.6 L287.3 33.7 L281 34.8Z"/>
<path d="M276.8 86.2 L281 86.7 L282 90.4 L277.8 91.5 L275.7 89.4Z"/>
<path d="M348.1 7.5 L356 3.3 L356 -0.1 L350.2 -0.1Z"/>
<path d="M285.2 109.6 L288.3 108.5 L289.4 113.8 L286.2 114.8Z"/>
<path d="M274.7 106.4 L279.9 104.3 L279.9 108.5 L275.7 109.6Z"/>
</g>
<g fill="#e9dfbc">
<path d="M241.6 177.8 L246.3 177.3 L249.5 182 L254.7 184.1 L255.8 187.3 L253.7 197.8 L239 197.8 L240 191.5 L241.1 184.1Z"/>
</g>
<clipPath id="uc"><path d="M357.3 -0.1 L478.5 -0.1 L471.7 18 L466.5 39 L467.5 51.6 L460.2 64.2 L445.5 70.5 L430.8 78.9 L418.2 74.7 L409.8 55.8 L395.1 55.8 L382.5 70.5 L367.8 64.2 L361.5 41.1 L355.2 18Z"/></clipPath>
<g fill="none" stroke="#fbd976" stroke-width=".9" stroke-opacity=".8" stroke-linejoin="round" clip-path="url(#uc)">
<path d="M353.1 35.4 L361.9 39.4 L370.1 39.5 L379 36.5 L387.5 37.7 L397.7 33.9 L404.9 30 L415.2 31.8 L420.7 36.4 L432.1 37.8 L441.2 34.6 L446.5 34.9 L452.1 32 L458.9 27.5 L467.1 27 L477.6 27.1"/>
<path d="M353.1 51.3 L361.2 49.2 L372.8 53.8 L383.3 55.8 L390.5 53.3 L397.6 49.2 L407.7 48.3 L418.3 47.2 L429.5 50.5 L434.8 47.7 L445.8 47.4 L457.2 46.5 L462.9 47.7 L473 45.5 L478.8 43.9"/>
<path d="M353.1 10.1 L359.9 6.3 L365.5 9.2 L371.9 9.7 L380 6.8 L389.8 3.3 L399.1 -0.3 L407 -3 L414 1.4 L424.3 -0.4 L435.1 -3.2 L442.8 0.2 L452.1 -3.6 L463.6 -6.3 L470.5 -3.7 L477.8 -5.6"/>
<path d="M353.1 45.2 L359.9 46.2 L367.5 45.7 L378.8 45.6 L387.6 49.1 L394 45.8 L405 48.8 L411.8 45.9 L421.7 50 L428.2 54.3 L439 55.3 L446.9 51.5 L452.4 55.9 L459.1 57.8 L466 60.9 L475 58.9 L481.4 61"/>
<path d="M353.1 43.5 L363.7 44.5 L370.7 48.5 L377.3 43.9 L384.2 43.4 L389.8 40.4 L397.4 41 L403.5 39.7 L414.3 44.3 L423.7 46.1 L432.6 42.7 L438.1 38.1 L449.1 40 L460.4 35.5 L469.7 35.3 L479.5 33.6"/>
<path d="M353.1 42.5 L363 46.2 L372.9 48.2 L383.1 52.1 L390.6 53.8 L401.5 57.3 L409.4 60.1 L420.1 60.8 L429.2 59.7 L438.2 60.7 L443.9 62 L455.4 65.6 L465.3 64.5 L475.1 65.3"/>
<path d="M353.1 7.5 L363.1 3.1 L372.1 2.9 L378.8 4.8 L387.2 5.9 L398.2 3.6 L403.5 1.7 L413.1 -1.1 L419.4 2.7 L428.8 2.2 L439.6 0.5 L449.1 -2.3 L457 0.6 L468.1 4.2 L475.7 4.9"/>
<path d="M353.1 38.7 L363.6 42 L373.3 46.3 L380.3 43.1 L388.4 41 L395 40.2 L404.2 40.1 L411.4 43.3 L422.9 42.9 L428.6 38.5 L439.3 34.1 L449 34.8 L456.2 37.6 L461.6 34.1 L469.7 29.6 L480.2 27.1"/>
<path d="M353.1 48.7 L361.2 50 L370.5 52.9 L381.8 54.6 L388.3 54.4 L394.7 49.8 L402.9 51.8 L409.3 49.6 L416.7 51.5 L425.2 52.6 L435.2 51.6 L445.5 55.4 L451.3 59.5 L461.1 56 L469.2 57.2 L480.2 56"/>
<path d="M353.1 61.4 L364.3 61.1 L373.6 58.3 L383.4 61.3 L392.7 63.3 L399.3 67.1 L410.7 71.6 L419.4 74.4 L426.6 78.2 L437.3 76.8 L443 76.3 L451.8 78.8 L460.1 74.3 L470.4 70.2 L480.7 67.1"/>
<path d="M353.1 11.8 L359.3 12 L369.1 15.2 L378.7 19.4 L387 23.6 L392.8 21 L401.4 19 L411.2 20.3 L419.8 23.6 L428.5 21.8 L436.2 25.1 L447.1 22.3 L457.7 26.7 L466.3 27.4 L472.8 27.8 L481.2 28.8"/>
<path d="M353.1 40.2 L360.9 43 L369.7 43 L379.3 38.9 L387.9 38 L399.2 42 L406.1 41.8 L412.2 41.2 L422.6 44.9 L430.8 43.2 L437.3 44.3 L448.3 40.8 L458.5 36.3 L465 33.7 L474.5 32.1 L482 33.2"/>
<path d="M353.1 10.5 L361.6 8.1 L368.1 8.4 L376.1 7.2 L383.9 7.5 L390.2 4.7 L399.4 6 L408 9.3 L417.1 12.7 L423.8 15 L434.1 18.8 L441.4 17 L452.4 14.4 L464 18 L470.1 15.6 L479.9 13.3"/>
<path d="M353.1 33.1 L363.3 29.5 L371.1 31.3 L376.5 28.5 L386 32.3 L397.4 28.7 L405.8 31.1 L414.2 32.9 L420.6 28.8 L426.6 24.5 L435.3 24.6 L444.1 21.3 L450.5 18.5 L461.1 23.1 L472.1 19.3 L477.8 23.5"/>
<path d="M353.1 25.9 L361.3 26 L369.2 27 L374.6 28.9 L385.1 25.9 L393.2 28.1 L401 25.3 L407.3 25.4 L412.7 29.1 L423 31 L433.6 32.3 L441.4 33.2 L449.9 37.8 L460.2 35.5 L471.2 37.8 L481.3 40.7"/>
<path d="M353.1 67.7 L362.7 70.2 L372.8 69.3 L382.6 65.3 L390 65 L395.3 63.6 L404.6 64.8 L411.3 69 L420.7 67.4 L430.1 68.1 L438.7 67.1 L450.3 68.4 L459.9 70.9 L471.4 66.4 L480.5 68.6"/>
<path d="M353.1 5 L359.6 3.8 L365.4 1.5 L376.4 2 L384.8 6.4 L393.7 11 L402.9 14 L408.7 14.9 L418.7 10.6 L429.8 7.4 L438 4.3 L446.4 5.3 L452 9.5 L459.9 9.8 L468.9 8.5 L476 10"/>
<path d="M353.1 55.4 L360.2 50.8 L367 46.4 L373.2 48.8 L380.9 52.6 L390.9 48.4 L402.4 52.6 L408.1 56.4 L416 56.2 L427.4 53.7 L436 57.9 L445.8 57.6 L457.2 60.6 L466.2 56.9 L475.4 56.5 L481.9 52.3"/>
<path d="M353.1 34.7 L362.6 34.2 L369.5 35 L377.3 37.6 L385.9 42.3 L397.2 44.6 L403.9 40.9 L414.8 43.6 L424 42.3 L430.9 44 L439.7 44.9 L449 47.3 L455.4 44.9 L466.8 48.8 L477.6 44.5"/>
<path d="M353.1 33.3 L362.3 29.6 L370.9 25.5 L376.7 27.2 L385.4 28.4 L393 28.2 L399.6 26.8 L409.5 30 L415.3 26.4 L425.6 27.5 L435.7 24.8 L443.6 22.5 L454 21.3 L463.3 25.9 L470.6 26.4 L480.6 30.4"/>
<path d="M353.1 8.5 L363.9 4.5 L369.6 5.2 L377.9 6.9 L385.1 9.5 L390.8 6.8 L400.2 2.8 L407.4 5 L417 2.9 L423.1 1.6 L433 0.3 L438.9 2.3 L447.8 6.2 L458.9 10.2 L466.9 13 L474.1 11.3 L481.9 15.4"/>
<path d="M353.1 28.5 L360.6 27.2 L368.4 26.2 L374.9 26.8 L385.1 27.2 L395.6 27.8 L402 30.2 L412.8 28.1 L418.2 28.3 L426.9 28.9 L438.2 30.4 L448.5 26.2 L457.2 29 L463 25 L472.9 28.8 L478.6 30"/>
<path d="M353.1 50.2 L359.9 47.6 L370 47.8 L380 46.8 L387.4 51.2 L396.9 51.2 L405.5 53.3 L415.2 57.2 L423.1 60.3 L432.5 63.6 L442.8 66.8 L453.7 71.1 L462.9 71.3 L472.7 74.2 L480.6 73.4"/>
<path d="M353.1 76.1 L360.7 72.9 L367.2 72.2 L374.3 76.7 L380 74.9 L385.9 76.3 L396.1 73.2 L401.7 72.8 L410.6 76.7 L416.1 73 L422.5 70.3 L429.2 72.4 L438.2 69.8 L444.6 67.7 L451 70.2 L458.2 70.6 L468.6 70.4 L475.5 74.1"/>
<path d="M421.6 -2 L421.5 9.3 L417.2 16 L420.1 27.2 L420.3 34.9 L418.2 43.3 L419.7 54.8 L415.1 61.6 L413.9 69.8 L415.9 80.1"/>
<path d="M375.7 -2 L373.5 5.3 L373.6 16 L378.3 25.3 L378.6 32.2 L381.2 38.4 L384.2 43.7 L387.2 54.3 L385.1 60 L381.3 69.8 L381 78.1"/>
<path d="M458.1 -2 L460.8 5.2 L464.7 13.1 L467.8 18.9 L468.2 25.5 L465 34 L463.2 44.5 L459.2 51.7 L458.9 58.9 L457.6 68.6 L453.9 78.2"/>
<path d="M471 -2 L472.4 8.5 L471.3 13.8 L468.8 23.6 L468.4 32.4 L473 37.7 L470.2 48 L468.3 57.1 L468.6 64.7 L467.1 71.8 L468.7 79.5"/>
<path d="M443.3 -2 L447.5 5.4 L449.6 14.2 L452.7 21.5 L449.3 27.3 L451 33.2 L447.9 42.9 L451.1 50.7 L447.3 59.6 L444 66.3 L443.1 72.3 L447.1 78.1"/>
<path d="M433.4 -2 L436.4 8.1 L434.8 15.8 L430.2 23.6 L432.1 31.4 L434.9 42.9 L435.9 52.3 L434.3 57.6 L435.7 65 L434.6 70.9 L437.3 79.4"/>
<path d="M375.9 -2 L379.7 8.1 L378.3 16.8 L374.9 25.2 L379.5 35 L381.6 43.5 L378.7 54 L379.9 65.2 L376 71.7 L376.7 78.5"/>
<path d="M466.5 -2 L466.2 5.6 L470.6 11.6 L474.5 17.7 L475 26.4 L472.8 35.1 L477.4 46.1 L478.4 56.5 L481.5 62.5 L485.2 69.6 L485.9 76.4"/>
<path d="M421.7 -2 L417.3 3.8 L421.9 10.2 L423.4 21.3 L425 28.5 L423.9 38.4 L426.7 47.4 L423.9 52.7 L420.5 60.9 L421.2 68.6 L421.4 74.9"/>
<path d="M396.3 -2 L392 7.3 L388.6 16.8 L389.6 28.1 L388.7 36.3 L390.5 45.5 L392.9 55.5 L397.6 63.8 L400.9 74.3"/>
<path d="M423.8 -2 L424.1 9 L423.4 17.6 L421.7 28.5 L423.9 34.1 L426.1 45 L428.4 54 L429.3 61.2 L425.8 66.9 L425.8 74.9"/>
<path d="M439 -2 L436.5 6.6 L435.5 13.8 L431.5 20.5 L435.9 31.5 L439.3 40.9 L442.2 48.8 L444.5 55.5 L448.3 64.3 L451.1 70.2 L451.5 76.2"/>
<path d="M386 -2 L384.3 5.2 L388 10.8 L387.1 21.2 L387.9 28.7 L383.5 34.2 L381.6 45.1 L385.7 53.5 L385.5 64.9 L383.5 71.5"/>
<path d="M380.3 -2 L378.9 8.6 L375.8 16.8 L380.5 27.6 L381.7 34.1 L385.3 40.6 L381.6 46.1 L379.8 55.9 L383.3 66.9 L379.9 76.6"/>
<path d="M409.6 -2 L407 3.8 L409 11 L406 17.5 L407.5 24.2 L406.3 34.4 L410 43.8 L407.4 52.8 L411.4 59.9 L409.3 69.4 L405.5 78.7"/>
<path d="M419.4 -2 L415.1 6.6 L413.1 15.7 L415.9 22.5 L413.9 28.3 L411.5 38.3 L412 45.3 L415.7 51.7 L411.3 63.2 L413.7 71.3 L417.7 79"/>
<path d="M422.7 -2 L421.3 7.4 L424 16.8 L424.1 25.3 L425.8 35.8 L430.1 44.4 L432.7 50.7 L433.7 57 L433.2 63.7 L435.9 73.8"/>
<path d="M414.8 -2 L415.6 4.7 L411.2 13.1 L413.2 22.1 L416.7 30.9 L413.4 37.3 L413.4 42.7 L412.8 50.7 L415.7 57.6 L419.5 63.3 L419.9 72.1"/>
<path d="M374.5 -2 L370.2 5.3 L371.3 12.5 L369.1 21 L365.2 30 L362.1 40.4 L358.9 47.3 L362 56.9 L357.9 67.1 L356.6 74.9"/>
<path d="M362.2 -2 L364.7 6.4 L361.4 17.8 L363.7 26 L361.2 31.4 L357.8 42.3 L355.9 50 L351.9 57.9 L356.6 63.4 L358.8 73.5 L356.5 80.2"/>
<path d="M411.6 -2 L410.3 9.2 L414.8 16.5 L410.5 25.6 L411.9 33.4 L410.4 39 L413.8 48.7 L417.5 57.6 L416.5 65.8 L415.4 76.3"/>
<path d="M398.1 -2 L398.6 4.5 L395.8 10.7 L395.5 17.3 L395 24.5 L396.7 36 L393.9 46.7 L389.9 54.4 L388.6 64 L384 70.9 L381.8 77.3"/>
<path d="M441.4 -2 L440.1 5 L444.2 11.2 L446.7 18.7 L450.5 28.5 L448.9 33.9 L444.9 41.6 L443.3 52.4 L443.4 62.5 L442.4 68.1 L438.1 74.8"/>
<path d="M361 -2 L360.3 5.3 L356.9 13.9 L354.6 23.6 L356.2 33.5 L353.4 39.6 L355.4 46.6 L354.3 54.4 L351.7 65.1 L350.3 72.2 L345.9 78.8"/>
<path d="M423.8 -2 L428.3 8.4 L429.9 15.5 L427.2 26.6 L428.8 36.1 L432.3 47.4 L433.6 54.1 L432.9 59.9 L428.7 67.7 L427.1 75.3"/>
<path d="M375.9 -2 L375.7 5.8 L377.3 12.1 L373.4 18.9 L372.7 26.3 L373.5 32.5 L374 42.1 L369.5 51.8 L368.2 59.5 L367.3 65.2 L367.2 70.8 L366.9 79.7"/>
</g>
<g fill="#dfdcd5">
<path d="M396.1 51.6 L409.8 49.5 L418.2 55.8 L418.2 81 L409.8 84.1 L396.1 79.9Z"/>
<path d="M364.6 18 L370.9 18 L370.9 25.3 L364.6 25.3Z"/>
</g>
<path d="M478 -0.4 L475.9 7.5 L472.7 15.9 L470.7 24.3 L467.5 31.6 L465.4 39 L467.5 49.5 L466.5 57.9 L463.3 64.2 L461.2 72.6 L456 79.9 L450.7 86.2 L444.4 93.6 L441.3 97 L433.7 101.2 L429.5 103.3 L423.2 109.6 L417.9 115.9 L414.8 123.2 L410.6 128.5 L408.5 141.1 L405.3 146.3 L403.2 155.8 L404.3 162.1 L402.2 170.5 L398 178.9 L396.9 187.3 L398 197 L395.9 202 L394.8 208.3 L391.7 213.5 L390.6 225.1 L383.3 233.5 L380.1 238.7 L377 244 L375.9 251.3 L374.9 257.6 L378 261.8 L379.1 269.2 L381.2 277.6 L383.3 281.8 L387.5 285.4 L392.7 284.9 L391.7 291.2 L389.6 300.7 L389.6 320 L760 320 L760 -20 L478 -20Z" fill="#b3d1ff"/>
<g clip-path="url(#sc)"><path d="M478 -0.4 L475.9 7.5 L472.7 15.9 L470.7 24.3 L467.5 31.6 L465.4 39 L467.5 49.5 L466.5 57.9 L463.3 64.2 L461.2 72.6 L456 79.9 L450.7 86.2 L444.4 93.6 L441.3 97 L433.7 101.2 L429.5 103.3 L423.2 109.6 L417.9 115.9 L414.8 123.2 L410.6 128.5 L408.5 141.1 L405.3 146.3 L403.2 155.8 L404.3 162.1 L402.2 170.5 L398 178.9 L396.9 187.3 L398 197 L395.9 202 L394.8 208.3 L391.7 213.5 L390.6 225.1 L383.3 233.5 L380.1 238.7 L377 244 L375.9 251.3 L374.9 257.6 L378 261.8 L379.1 269.2 L381.2 277.6 L383.3 281.8 L387.5 285.4 L392.7 284.9 L391.7 291.2 L389.6 300.7" fill="none" stroke="#a4c6ff" stroke-width="34" filter="url(#bl)"/></g>
<g fill="#9dbfff">
<path d="M383.3 170.5 L390.6 169.4 L395.9 170.5 L400.1 174.7 L395.9 181 L392.7 185.2 L384.3 186.2 L383.3 181Z"/>
<path d="M361.2 289.1 L380.1 288.1 L381.2 293.3 L379.1 300.7 L365.4 300.7 L362.3 294.4Z"/>
<path d="M127.2 279.7 L131.4 281.8 L136.6 290.2 L145 294.9 L141.9 300.7 L126.1 300.7Z"/>
<path d="M150.3 230.9 L152.9 230.9 L154 235.6 L152.4 238.2 L149.2 237.7Z"/>
<path d="M152.9 243.5 L155 244 L154 249.2 L152.4 248.2Z"/>
<path d="M177.6 294.4 L182.3 290.2 L186.5 289.1 L185.4 295.4 L182.3 299.1 L179.1 296.5Z"/>
<path d="M188.1 288.6 L190.7 288.1 L189.6 295.4 L188.1 293.3Z"/>
<path d="M327.1 201 L331.3 202 L330.3 206.2 L327.7 205.1Z"/>
<path d="M327.1 182 L330.3 183.1 L331.3 187.3 L328.7 186.7Z"/>
<path d="M451.8 55.8 L459.1 53.7 L462.3 57.9 L456 62.1 L450.7 60Z"/>
<path d="M398.2 21.7 L402.4 21.1 L403.5 24.3 L399.3 25.3Z"/>
<path d="M460.2 28.5 L467.5 27.4 L468.6 31.6 L462.3 32.7Z"/>
</g>
<g fill="none" stroke="#9dbfff" stroke-linejoin="round" stroke-linecap="round">
<path d="M300.9 39 L306.1 43.2 L311.4 48.4 L316.6 51.6 L316.6 57.9 L315.6 64.2 L314.5 70.5 L313 75.7 L314.5 79.9 L307.2 86.2 L300.9 91.5 L297.7 97.8" stroke-width="3.2"/>
<path d="M316.6 51.6 L324.5 54.2 L333.4 46.3 L345 37.9" stroke-width="1.4"/>
<path d="M299.8 42.1 L305.1 39 L310.3 41.1" stroke-width="2.5"/>
</g>
<g fill="none" stroke="#8db4ff" stroke-opacity=".6" stroke-width=".8" stroke-linejoin="round">
<path d="M281 33.2 L287.3 32.7 L294.6 28.5 L299.8 36.9"/>
<path d="M265.2 71.5 L271.5 65.2 L279.9 58.4"/>
<path d="M239 70.5 L245.3 75.7 L251.6 80.4"/>
<path d="M205.9 1.7 L210.6 1.7 L213.3 3.3"/>
<path d="M207.5 2.2 L208 7.5"/>
<path d="M2.3 30.6 L11.7 41.1 L23.3 48.4"/>
<path d="M27.5 51.6 L32.7 51.1"/>
<path d="M38 55.8 L48.5 56.8 L52.7 49.5 L53.2 43.2"/>
<path d="M56.9 45.3 L59 57.9 L69.5 62.6 L66.3 67.3 L61.1 70.5"/>
<path d="M62.1 42.1 L69.5 39 L77.9 37.9"/>
<path d="M82.1 50.5 L88.4 57.9"/>
<path d="M97.8 56.8 L106.2 52.6"/>
<path d="M110.9 51.1 L118.8 52.1 L132.4 64.2 L151.3 72.6 L174.4 95.7"/>
<path d="M52.7 43.2 L54.8 51.6 L50.6 57.9"/>
<path d="M57.9 46.3 L59 51.6"/>
<path d="M287.3 232.4 L294.6 230.3 L299.8 226.1 L307.2 223 L310.3 228.2 L316.6 225.1 L322.9 223"/>
<path d="M320.8 253.4 L325 258.7 L332.4 262.9"/>
<path d="M329.2 254.5 L339.7 252.4 L348.1 251.3"/>
<path d="M346 136.9 L348.1 142.1 L347.1 146.3"/>
<path d="M294.6 100.1 L297.7 102.2"/>
<path d="M356 143.2 L360.2 147.4 L361.2 152.6"/>
<path d="M362.3 160 L368.6 162.1"/>
<path d="M385.4 122.2 L395.9 125.3"/>
<path d="M356 251.3 L362.3 253.4 L368.6 254.5 L374.9 253.4"/>
<path d="M369.6 258.7 L373.8 262.9 L377 265"/>
<path d="M406.6 87.3 L409.8 91.5"/>
<path d="M460.2 55.8 L462.3 62.1"/>
</g>
<g fill="none" stroke="#7fabff" stroke-width="1.3" stroke-linejoin="round">
<path d="M-1.9 277.6 L2.3 274.4 L5.4 269.2 L7.5 262.9 L9.6 265 L8.6 270.2 L12.8 271.3 L14.4 266 L17 260.8 L18.6 265 L17.5 270.2 L21.2 263.9 L23.8 267.1 L22.8 272.3 L25.4 274.4 L24.9 279.7 L27.5 284.9 L30.6 286"/>
<path d="M11.7 258.7 L15.9 256.1"/>
</g>
<g fill="none" stroke="#d3cbb9" stroke-width=".9" stroke-linejoin="round">
<path d="M117.7 -0.1 L118.3 10.6 L114.6 19 L119.8 28.5 L120.4 47.4 L113.6 55.8 L118.8 75.7 L117.7 97.8"/>
<path d="M126.7 -0.1 L123.5 11.7 L116.7 21.1"/>
<path d="M202.2 -0.1 L206.4 7.5 L191.7 28.5 L194.9 49.5 L201.2 65.2 L207.5 70.5 L206.4 81 L192.8 97.8"/>
<path d="M214.8 -0.1 L220.1 10.6 L231.6 24.3 L243.2 23.2 L245.3 18"/>
<path d="M20.7 147.4 L27.5 140 L33.8 138.1 L39 139.5 L47.4 147.4 L51.6 146.3 L57.9 149.5 L65.3 148.4 L70.5 154.2 L78.9 153.7 L90.5 160.5 L98.9 158.1 L104.1 159.4 L107.3 162.6 L116.7 165.7 L121.9 164.2 L132.4 160.5 L141.9 162.9"/>
<path d="M117.7 97 L120.4 102.2 L117.7 110.6 L126.1 149.5 L127.2 155.8"/>
<path d="M141.9 162.9 L135.6 170.5 L128.2 181 L121.9 197.8"/>
<path d="M141.9 162.9 L150.3 167.3 L158.7 178.9 L162.9 191.5 L168.1 197.8"/>
<path d="M199.1 112.7 L200.1 123.2 L204.3 131.6 L207 147.4 L203.3 156.8 L207 169.4 L203.3 179.9 L205.4 188.3 L202.2 197.8"/>
<path d="M41.1 250.3 L35.9 260.8 L30.6 275.5 L27.5 281.8 L14.9 286 L2.3 300.1"/>
<path d="M121.9 197.3 L118.8 202 L111.5 217.7 L109.4 229.3 L102 236.6 L99.9 246.1 L102 260.8 L99.9 269.2 L104.1 277.6 L103.6 300.7"/>
<path d="M168.1 197.3 L174.4 202 L176 206.2 L180.7 210.4"/>
<path d="M246.3 216.7 L249.5 220.9 L258.9 221.9 L265.2 216.7 L274.7 214.6 L291.5 208.3 L296.7 204.1"/>
<path d="M184.4 233.5 L180.2 244 L181.2 259.7 L176 275.5"/>
<path d="M202.2 197.3 L197 212.5 L188.1 229.1"/>
<path d="M327.1 241.9 L333.4 236.6 L339.7 239.8 L348.1 248.2"/>
<path d="M322.9 288.1 L328.2 281.8 L335.5 275.5 L347.1 280.7"/>
<path d="M315.1 167.8 L312.4 176.8 L307 183.1"/>
<path d="M315.1 167.8 L322.9 172.6 L327.1 182"/>
<path d="M368.6 233.5 L372.8 246.1 L366.5 252.4"/>
<path d="M390.6 225.1 L377 244"/>
<path d="M356 107.5 L362.3 103.3 L368.6 107.5"/>
</g>
<g fill="none" stroke="#fad166" stroke-width="1.15" stroke-linejoin="round" stroke-linecap="round">
<path d="M382.2 97 L381.2 106.4 L387.5 110.6 L400.1 120.1 L402.2 128.5"/>
<path d="M361.2 113.8 L368.6 121.1 L371.7 127.4 L382.2 135.8 L387.5 139"/>
<path d="M349.2 97 L348.1 105.4 L343.9 112.7 L342.9 121.1 L346 128.5"/>
<path d="M356 100.1 L350.2 103.3 L348.1 105.4"/>
<path d="M357.3 9.1 L363.6 3.3 L369.9 0.1"/>
<path d="M364.6 14.8 L365.7 24.3 L372 31.6 L370.9 41.1 L376.2 51.6 L369.9 60 L372 70.5 L380.4 76.8"/>
<path d="M393 15.9 L382.5 23.2 L380.4 31.6 L384.6 39 L396.1 46.3"/>
<path d="M405.6 4.9 L407.7 13.8 L416.1 21.1 L414 30.6 L420.3 39 L418.2 49"/>
<path d="M412.9 10.1 L409.8 -0.1"/>
<path d="M424.5 10.1 L426.6 3.3 L424.5 -0.1"/>
<path d="M435 10.1 L439.2 3.3 L445.5 -0.1"/>
<path d="M442.3 11.2 L451.8 7.5 L460.2 3.3 L466.5 -0.1"/>
<path d="M447.6 18 L456 13.8 L464.4 11.7 L472.7 8.5 L475.9 3.3"/>
<path d="M456 22.2 L464.4 20.1 L470.7 18"/>
<path d="M460.2 32.7 L466.5 31.6 L468.6 39 L466.5 46.3 L460.2 48.4"/>
<path d="M460.2 48.4 L464.4 53.7 L462.3 60 L456 64.2"/>
<path d="M450.7 49.5 L447.6 55.8 L441.3 60 L435 65.2 L430.8 70.5 L426.6 69.4 L420.3 72.6 L415 70.5 L414 74.7"/>
<path d="M440.2 47.9 L439.2 41.1 L442.3 34.8 L441.3 28.5"/>
<path d="M424.5 49 L426.6 41.1 L424.5 33.7 L428.7 28.5 L426.6 21.1 L424.5 10.1"/>
<path d="M409.8 49.5 L414 55.8 L420.3 60 L426.6 69.4"/>
<path d="M430.8 28.5 L432.9 34.8 L439.2 41.1"/>
<path d="M420.3 23.2 L418.2 31.6 L414 30.6"/>
<path d="M430.8 28.5 L435 22.2 L435 10.1"/>
<path d="M445.5 31.6 L449.7 39 L460.2 41.1"/>
<path d="M445.5 31.6 L443.4 41.1 L450.7 43.2 L460.2 43.2"/>
<path d="M416.1 21.1 L424.5 22.2 L435 22.2 L443.4 24.3"/>
<path d="M396.1 46.3 L400.3 51.6 L398.2 55.8"/>
<path d="M418.2 49 L424.5 55.8 L432.9 57.9 L440.2 55.8 L447.6 55.8"/>
<path d="M456 33.2 L451.8 39 L443.4 41.1"/>
<path d="M428.7 28.5 L424.5 33.7 L414 39 L405.6 41.1 L396.1 39"/>
<path d="M466.5 -0.1 L468.6 6.4 L472.7 8.5"/>
<path d="M456 -0.1 L456 6.4 L451.8 7.5"/>
<path d="M420.3 72.6 L422.4 81 L420.3 87.3"/>
<path d="M445.5 64.2 L449.7 70.5 L447.6 76.8"/>
<path d="M394 31.6 L385.6 39 L384.6 47.4 L387.7 55.8 L382.5 64.2"/>
<path d="M374.1 91.5 L365.7 97"/>
<path d="M386.7 72.6 L393 74.7 L395.1 81"/>
<path d="M351 10.6 L357.3 9.1"/>
<path d="M460.2 32.7 L453.9 28.5 L445.5 24.3"/>
<path d="M460.2 32.7 L456 39 L449.7 39"/>
<path d="M460.2 25.3 L451.8 22.2 L445.5 18 L441.3 16.9"/>
<path d="M460.2 41.1 L451.8 43.2 L445.5 46.3"/>
<path d="M456 22.2 L451.8 28.5 L449.7 34.8 L450.7 43.2"/>
<path d="M445.5 11.7 L449.7 16.9 L453.9 18 L460.2 18"/>
<path d="M443.4 41.1 L445.5 34.8 L443.4 28.5"/>
<path d="M459.6 25.3 L465.4 24.3 L469.6 21.1"/>
<path d="M460.2 36.9 L464.4 36.9"/>
<path d="M456 33.2 L456 41.1 L457 48.4"/>
</g>
<g fill="none" stroke="#f6cb52" stroke-width="1.7" stroke-linejoin="round" stroke-linecap="round">
<path d="M294.6 174.7 L287.3 186.2 L278.9 197.8"/>
<path d="M291.5 191.5 L307.2 183.1 L322.9 187.3 L335.5 191.5 L339.7 192.5"/>
<path d="M382.2 172.6 L380.1 184.1 L383.3 188.3"/>
<path d="M356 187.3 L366.5 189.4 L380.1 186.2 L395.9 181"/>
<path d="M395.9 178.9 L395.9 191.5 L394.8 197.8"/>
<path d="M9.6 192 L17 202 L23.3 208.3 L27.5 219.8 L30.6 232.4"/>
<path d="M-0 221.9 L6.5 225.1 L13.8 230.3 L22.2 231.4 L30.6 233.5"/>
<path d="M-0 241.9 L4.4 234.5 L13.8 231.9"/>
<path d="M30.6 233.5 L38 239.8 L47.4 245 L54.8 246.6 L63.2 246.6 L81 240.3 L88.4 235.6 L102 235.6 L116.7 242.4 L128.2 243.5 L142.9 240.3 L149.2 238.7 L165 240.3 L170.2 235.6 L177 235.6"/>
<path d="M48 245 L50.6 255.5 L53.7 263.9 L61.1 271.3 L62.1 281.8 L60 291.2"/>
<path d="M168.1 239.8 L163.9 246.1 L156.6 251.3 L151.3 258.7 L137.7 262.9 L131.4 270.2 L126.1 279.7 L125.1 300.7"/>
<path d="M175.5 235.6 L182.3 233.5 L193.8 232.4 L197 226.1 L205.4 224.6 L212.7 226.7 L227.4 226.7 L243.2 215.6 L248.4 210.4 L254.7 205.7 L262.1 205.1 L266.3 201.5 L278.9 197.3"/>
<path d="M175.5 228.2 L182.3 227.7 L187.5 227.2 L197 226.1"/>
<path d="M357 240.3 L350.2 241.9 L348.1 248.2 L349.2 256.6 L348.1 265 L347.1 280.7 L342.9 300.7"/>
<path d="M389.6 201.5 L392.7 206.2 L391.7 213.5 L390.6 225.1 L377 226.1 L371.7 230.3 L362.3 233.5 L360.2 237.7 L355.5 239.8"/>
<path d="M-0 141.1 L2.3 147.4 L3.3 160 L2.3 166.3 L6.5 174.7 L8.1 187.3 L9.6 192.5"/>
<path d="M-0 96.5 L1.2 101.2 L0.2 107"/>
<path d="M24.3 1.2 L18.6 4.3 L15.9 10.6 L9.6 22.2 L2.3 25.9 L-0.9 27.4"/>
<path d="M-0 0.1 L1.2 7.5"/>
<path d="M-0 64.2 L6.5 70.5 L7.5 78.9 L6.5 88.3 L1.2 97.8"/>
<path d="M304.6 -0.1 L308.2 1.7 L312.4 1.2 L316.6 3.3"/>
</g>
<g fill="none" stroke="#f8a233" stroke-width="2.75" stroke-linejoin="round" stroke-linecap="round">
<path d="M393 3.8 L405.6 4.9 L412.9 10.1 L424.5 10.1 L435 10.1 L442.3 11.2 L447.6 18 L456 22.2 L459.6 25.3 L460.2 32.7 L460.2 48.4 L450.7 49.5 L440.2 47.9 L424.5 49 L409.8 49.5 L403.5 48.4 L396.1 46.3 L394 31.6 L393 15.9 L393 3.8" stroke-width="2.1"/>
<path d="M357.3 9.1 L364.6 14.8 L383.5 15.4 L393 15.9 L409.8 19.6 L420.3 23.2 L430.8 28.5 L445.5 31.6 L456 33.2" stroke-width="2.1"/>
<path d="M405.6 49 L398.2 55.8 L389.8 63.1 L386.7 72.6 L379.3 77.8 L374.1 91.5 L372 97.8"/>
<path d="M420.3 81 L419.2 97.8"/>
<path d="M445.5 24.3 L447.6 23.2 L448.1 28.5" stroke-width="2.1"/>
<path d="M372.8 96.5 L371.7 101.2 L362.3 110.6 L355 122.2"/>
<path d="M419 96.5 L415.8 103.3 L412.7 110.6 L407.4 125.3 L402.2 128.5"/>
<path d="M400.1 152.6 L395.9 157.9 L393.8 164.2 L387.5 168.4 L382.2 172.6"/>
<path d="M357 120.1 L348.1 128.5 L339.7 136.9 L332.4 149.5 L326.1 155.8 L320.8 158.4 L310.3 160 L301.9 164.2 L294.6 174.7"/>
</g>
<g fill="#fff" stroke="#333">
<circle cx="459" cy="32.8" r="3.3" stroke-width="1.6"/>
<circle cx="401" cy="156" r="2.6" stroke-width="1.4"/>
<circle cx="364.5" cy="8.3" r="1.7" stroke-width="0.9"/>
<circle cx="442.9" cy="17.7" r="1.7" stroke-width="0.9"/>
<circle cx="473.1" cy="8.5" r="1.7" stroke-width="0.9"/>
<circle cx="407.3" cy="45.4" r="1.7" stroke-width="0.9"/>
<circle cx="439.7" cy="55.3" r="1.7" stroke-width="0.9"/>
<circle cx="386.6" cy="77.3" r="1.7" stroke-width="0.9"/>
<circle cx="295.3" cy="-0.1" r="1.7" stroke-width="0.9"/>
<circle cx="319.8" cy="161.7" r="1.7" stroke-width="0.9"/>
<circle cx="314.7" cy="167.5" r="1.7" stroke-width="0.9"/>
<circle cx="306.9" cy="182.6" r="1.7" stroke-width="0.9"/>
<circle cx="402.9" cy="167.5" r="1.7" stroke-width="0.9"/>
<circle cx="387.8" cy="186.8" r="1.7" stroke-width="0.9"/>
<circle cx="393.9" cy="209.5" r="1.7" stroke-width="0.9"/>
<circle cx="348.7" cy="255.7" r="1.7" stroke-width="0.9"/>
<circle cx="347.8" cy="262.7" r="1.7" stroke-width="0.9"/>
<circle cx="5.1" cy="158.9" r="1.7" stroke-width="0.9"/>
<circle cx="141.9" cy="162.7" r="1.7" stroke-width="0.9"/>
<circle cx="187.8" cy="228.7" r="1.7" stroke-width="0.9"/>
<circle cx="40.8" cy="248" r="1.7" stroke-width="0.9"/>
<circle cx="0.8" cy="25.6" r="1.7" stroke-width="0.9"/>
</g>
<g font-family="Liberation Sans, sans-serif" font-weight="bold" font-size="8.4" fill="#fff" text-anchor="middle">
<rect x="430.6" y="28.1" width="15.4" height="9.3" fill="#6a9f3e"/>
<text x="438.3" y="35.7" textLength="10.9" lengthAdjust="spacingAndGlyphs">M4</text>
<rect x="402.2" y="111.2" width="15.6" height="9.3" fill="#6a9f3e"/>
<text x="410" y="118.8" textLength="11.1" lengthAdjust="spacingAndGlyphs">M1</text>
<rect x="339.1" y="187.2" width="20.9" height="9.6" fill="#6a9f3e"/>
<text x="349.5" y="195.1" textLength="16.4" lengthAdjust="spacingAndGlyphs">A48</text>
<rect x="4.1" y="192.1" width="20.7" height="9.7" fill="#6a9f3e"/>
<text x="14.5" y="200.1" textLength="16.2" lengthAdjust="spacingAndGlyphs">B81</text>
<rect x="-2" y="78.6" width="20.9" height="9.2" fill="#6a9f3e"/>
<text x="8.5" y="86.1" textLength="16.4" lengthAdjust="spacingAndGlyphs">B81</text>
<rect x="24.2" y="-5" width="20.9" height="9.8" fill="#6a9f3e"/>
<text x="34.7" y="3.1" textLength="16.4" lengthAdjust="spacingAndGlyphs">A41</text>
<rect x="51.1" y="291.1" width="20.6" height="9.8" fill="#6a9f3e"/>
<text x="61.4" y="299.2" textLength="16.1" lengthAdjust="spacingAndGlyphs">A25</text>
<rect x="116" y="282.7" width="21" height="9.8" fill="#6a9f3e"/>
<text x="126.5" y="290.8" textLength="16.5" lengthAdjust="spacingAndGlyphs">M23</text>
</g>
<g font-family="Liberation Sans, sans-serif" font-size="9.2" fill="#222" text-anchor="middle">
<path d="M227.8 217 Q236.3 215.4 244.8 217 Q246.1 222.7 245 226.8 L236.3 229.4 L227.6 226.8 L226.5 222.7 Z" fill="#fff" stroke="#222" stroke-width="1.1" stroke-linejoin="round"/>
<text x="236.3" y="225.3" textLength="16" lengthAdjust="spacingAndGlyphs">M31</text>
<path d="M62.9 239 Q71.4 237.4 79.9 239 Q81.2 244.6 80.1 248.6 L71.4 251.2 L62.7 248.6 L61.6 244.6 Z" fill="#fff" stroke="#222" stroke-width="1.1" stroke-linejoin="round"/>
<text x="71.4" y="247.2" textLength="16" lengthAdjust="spacingAndGlyphs">M31</text>
</g>
<circle cx="190.5" cy="76" r="5.6" fill="#fff" stroke="#d9d9d2" stroke-width="1"/>
<path d="M190.5 71.8 l-2.1 2.6 h1 l-1.7 2.2 h1.1 l-1.6 2 h2.6 v1.2 h1.4 v-1.2 h2.6 l-1.6 -2 h1.1 l-1.7 -2.2 h1z" fill="#5ea325"/>
<circle cx="288" cy="270" r="5.6" fill="#fff" stroke="#d9d9d2" stroke-width="1"/>
<path d="M288 265.8 l-2.1 2.6 h1 l-1.7 2.2 h1.1 l-1.6 2 h2.6 v1.2 h1.4 v-1.2 h2.6 l-1.6 -2 h1.1 l-1.7 -2.2 h1z" fill="#5ea325"/>
<g font-family="Liberation Sans, sans-serif" stroke="#fff" stroke-opacity=".85" stroke-width="2.4" stroke-linejoin="round" paint-order="stroke" style="paint-order:stroke">
<text x="240.4" y="10.4" font-size="11" fill="#2e2e2e" font-style="normal" textLength="50.1" lengthAdjust="spacingAndGlyphs">Katoomba</text>
<text x="328.4" y="18" font-size="10" fill="#555" font-style="normal" textLength="31" lengthAdjust="spacingAndGlyphs">Penrith</text>
<text x="384.6" y="22.2" font-size="11" fill="#2e2e2e" font-style="normal" textLength="54.6" lengthAdjust="spacingAndGlyphs">North Ryde</text>
<text x="450.9" y="4.6" font-size="11" fill="#2e2e2e" font-style="normal" textLength="42" lengthAdjust="spacingAndGlyphs">Dee Why</text>
<text x="465.2" y="45.7" font-size="12" fill="#2e2e2e" font-style="normal" textLength="39.1" lengthAdjust="spacingAndGlyphs">Sydney</text>
<text x="362.4" y="55.3" font-size="10" fill="#555" font-style="normal" textLength="41" lengthAdjust="spacingAndGlyphs">Liverpool</text>
<text x="418.2" y="80.1" font-size="10" fill="#555" font-style="normal" textLength="42.4" lengthAdjust="spacingAndGlyphs">Hurstville</text>
<text x="318.3" y="87.4" font-size="10" fill="#555" font-style="normal" textLength="63.8" lengthAdjust="spacingAndGlyphs">Campbelltown</text>
<text x="372.5" y="150.2" font-size="11" fill="#2e2e2e" font-style="normal" textLength="57.7" lengthAdjust="spacingAndGlyphs">Wollongong</text>
<text x="295.6" y="157.5" font-size="11" fill="#2e2e2e" font-style="normal" textLength="49.7" lengthAdjust="spacingAndGlyphs">Mittagong</text>
<text x="277.7" y="171.3" font-size="11" fill="#2e2e2e" font-style="normal" textLength="32.7" lengthAdjust="spacingAndGlyphs">Bowral</text>
<text x="281.6" y="194.3" font-size="11" fill="#2e2e2e" font-style="normal" textLength="50.5" lengthAdjust="spacingAndGlyphs">Moss Vale</text>
<text x="372.7" y="179.3" font-size="11" fill="#2e2e2e" font-style="normal" textLength="59.5" lengthAdjust="spacingAndGlyphs">Port Kembla</text>
<text x="365.1" y="198.5" font-size="11" fill="#2e2e2e" font-style="normal" textLength="45.8" lengthAdjust="spacingAndGlyphs">Oak Flats</text>
<text x="379.7" y="235.5" font-size="10.5" fill="#2e2e2e" font-style="normal" textLength="29.8" lengthAdjust="spacingAndGlyphs">Kiama</text>
<text x="333.6" y="250.6" font-size="10.5" fill="#2e2e2e" font-style="normal" textLength="31" lengthAdjust="spacingAndGlyphs">Nowra</text>
<text x="316.4" y="274.6" font-size="11" fill="#2e2e2e" font-style="normal" textLength="62.9" lengthAdjust="spacingAndGlyphs">South Nowra</text>
<text x="328.7" y="289.8" font-size="11" fill="#2e2e2e" font-style="normal" textLength="48.7" lengthAdjust="spacingAndGlyphs">Sanctuary</text>
<text x="340.6" y="301.6" font-size="11" fill="#2e2e2e" font-style="normal" textLength="24.9" lengthAdjust="spacingAndGlyphs">Point</text>
<text x="118.3" y="158.4" font-size="11" fill="#2e2e2e" font-style="normal" textLength="48" lengthAdjust="spacingAndGlyphs">Crookwell</text>
<text x="165.4" y="224.7" font-size="10.5" fill="#2e2e2e" font-style="normal" textLength="44.7" lengthAdjust="spacingAndGlyphs">Goulburn</text>
<text x="29.5" y="243.9" font-size="11" fill="#2e2e2e" font-style="normal" textLength="23.4" lengthAdjust="spacingAndGlyphs">Yass</text>
<text x="-11" y="154.5" font-size="11" fill="#2e2e2e" font-style="normal" textLength="37.5" lengthAdjust="spacingAndGlyphs">Boorowa</text>
<text x="-13.5" y="21.3" font-size="11" fill="#2e2e2e" font-style="normal" textLength="27" lengthAdjust="spacingAndGlyphs">Cowra</text>
<text x="164.8" y="91.6" font-size="10" fill="#3a7238" font-style="italic" textLength="51.7" lengthAdjust="spacingAndGlyphs">Abercrombie</text>
<text x="181.4" y="101.4" font-size="10" fill="#3a7238" font-style="italic" textLength="20.1" lengthAdjust="spacingAndGlyphs">River</text>
<text x="164.2" y="111.5" font-size="10" fill="#3a7238" font-style="italic" textLength="54.3" lengthAdjust="spacingAndGlyphs">National Park</text>
<text x="250" y="280.7" font-size="10" fill="#3a7238" font-style="italic" textLength="28.9" lengthAdjust="spacingAndGlyphs">Morton</text>
<text x="224.3" y="290.7" font-size="10" fill="#3a7238" font-style="italic" textLength="54.6" lengthAdjust="spacingAndGlyphs">National Park</text>
</g>
<g font-family="'Liberation Sans','Noto Sans CJK TC',sans-serif" stroke="#fff" stroke-opacity=".85" stroke-width="2.2" stroke-linejoin="round" style="paint-order:stroke">
<text x="313.5" y="7.2" font-size="11.3" fill="#2e2e2e" textLength="45.4" lengthAdjust="spacingAndGlyphs">彭里斯市</text>
<text x="466.2" y="32.2" font-size="13.5" fill="#2e2e2e" textLength="27.6" lengthAdjust="spacingAndGlyphs">雪梨</text>
<text x="355.3" y="43.9" font-size="11.5" fill="#2e2e2e" textLength="46.1" lengthAdjust="spacingAndGlyphs">利物浦市</text>
<text x="416.8" y="69.3" font-size="11.5" fill="#2e2e2e" textLength="46.2" lengthAdjust="spacingAndGlyphs">好市圍市</text>
<text x="331.3" y="76.6" font-size="12" fill="#2e2e2e" textLength="48.5" lengthAdjust="spacingAndGlyphs">金寶鎮市</text>
<text x="383.7" y="138.7" font-size="12" fill="#2e2e2e" textLength="36" lengthAdjust="spacingAndGlyphs">臥龍崗</text>
<text x="376.5" y="223.4" font-size="11.3" fill="#2e2e2e" textLength="34.4" lengthAdjust="spacingAndGlyphs">基亞馬</text>
<text x="337.8" y="238.6" font-size="11" fill="#2e2e2e" textLength="22.4" lengthAdjust="spacingAndGlyphs">諾拉</text>
<text x="176.7" y="212.4" font-size="11" fill="#2e2e2e" textLength="22.4" lengthAdjust="spacingAndGlyphs">高奔</text>
<text x="231.5" y="257.5" font-size="11.5" fill="#3a7238" textLength="46.4" lengthAdjust="spacingAndGlyphs">摩頓國家</text>
<text x="256.5" y="271.2" font-size="11" fill="#3a7238" textLength="21" lengthAdjust="spacingAndGlyphs">公園</text>
</g>
<g font-family="Liberation Serif, serif" font-size="21" letter-spacing="-0.6">
<text x="8.2" y="292.6" fill="#666" fill-opacity=".6" stroke="#666" stroke-opacity=".35" stroke-width=".5" filter="url(#gsh)" textLength="57" lengthAdjust="spacingAndGlyphs">Google</text>
<text x="7.4" y="291.2" fill="#fff" fill-opacity=".95" stroke="#fff" stroke-width=".3" textLength="57" lengthAdjust="spacingAndGlyphs">Google</text>
</g>
</g>
</svg>
<div class="gm" style="left:13px;top:6px;width:16px;height:34px"><svg width="16" height="34" viewBox="0 0 16 34" aria-label="Street View Pegman"><defs><radialGradient id="pg" cx=".4" cy=".32" r=".75"><stop offset="0" stop-color="#ffe07a"/><stop offset=".55" stop-color="#f6a800"/><stop offset="1" stop-color="#c27600"/></radialGradient><linearGradient id="pb" x1="0" y1="0" x2="1" y2="0"><stop offset="0" stop-color="#e59a00"/><stop offset=".35" stop-color="#fbbd10"/><stop offset=".7" stop-color="#f5ab00"/><stop offset="1" stop-color="#d48a00"/></linearGradient></defs>
<path d="M2.5 13 Q2.5 11.3 4.2 11.3 H12.3 Q14.1 11.3 14.1 13 V21 Q14.1 21.6 13.5 21.6 H12.6 V19.5 H11.3 V30.2 Q11.3 30.8 10.7 30.8 H5.7 Q5.1 30.8 5.1 30.2 V19.5 H3.9 V21.6 H3.1 Q2.5 21.6 2.5 21Z" fill="url(#pb)" stroke="#b87200" stroke-width=".6"/>
<path d="M8.2 20.5 V30.6" stroke="#c98600" stroke-width=".5"/>
<path d="M4.9 11.4 H11.8 L8.5 16.6Z" fill="#e8616c"/>
<circle cx="8.2" cy="7.5" r="3.9" fill="url(#pg)" stroke="#b87200" stroke-width=".6"/></svg></div>
<div class="gm" style="left:13px;top:51px;width:16px;height:34px"><svg width="16" height="34" viewBox="0 0 16 34" aria-label="Zoom"><path d="M4.2 9H12.2M8.2 5V13M4.2 25.8H12.2" stroke="#666" stroke-width="2" fill="none"/><rect x="1.5" y="17.9" width="13" height="1" fill="#d0d0d0"/></svg></div>
<div id="mt"><div style="width:38px;z-index:1"><svg style="left:7px" class="" width="24" height="14" viewBox="0 0 24 14" role="img" aria-label="地圖"><title>地圖</title><text x="0" y="11" font-family="'Liberation Sans','Noto Sans CJK TC',sans-serif" font-size="11.6" font-weight="bold" fill="#000" textLength="23" lengthAdjust="spacingAndGlyphs">地圖</text></svg></div><div style="width:61px;margin-left:1px"><svg style="left:7px" class="" width="48" height="14" viewBox="0 0 48 14" role="img" aria-label="衛星檢視"><title>衛星檢視</title><text x="0" y="11" font-family="'Liberation Sans','Noto Sans CJK TC',sans-serif" font-size="11.7" fill="#565656" textLength="47" lengthAdjust="spacingAndGlyphs">衛星檢視</text></svg></div></div>
<div class="cr" style="left:439px;width:189px"><svg style="left:5px" class="" width="47.2" height="14" viewBox="0 0 47.2 14" role="img" aria-label="地圖資料"><title>地圖資料</title><text x="0" y="11" font-family="'Liberation Sans','Noto Sans CJK TC',sans-serif" font-size="11.8" fill="#444" textLength="47.2" lengthAdjust="spacingAndGlyphs">地圖資料</text></svg><span style="left:52.3px">©2014 Google</span><svg style="left:135px" class="" width="47.2" height="14" viewBox="0 0 47.2 14" role="img" aria-label="使用條款"><title>使用條款</title><text x="0" y="11" font-family="'Liberation Sans','Noto Sans CJK TC',sans-serif" font-size="11.8" fill="#444" textLength="47.2" lengthAdjust="spacingAndGlyphs">使用條款</text></svg></div>
<div class="cr" style="left:629.5px;width:82.5px"><svg style="left:3.8px" class="" width="70.8" height="14" viewBox="0 0 70.8 14" role="img" aria-label="回報地圖錯誤"><title>回報地圖錯誤</title><text x="0" y="11" font-family="'Liberation Sans','Noto Sans CJK TC',sans-serif" font-size="11.8" fill="#444" textLength="70.8" lengthAdjust="spacingAndGlyphs">回報地圖錯誤</text></svg></div>
</div>
<h2>To travel it!</h2>
<p id="coin"><svg class="" width="104" height="18" viewBox="0 0 104 18" role="img" aria-label="您的電子錢幣為："><title>您的電子錢幣為：</title><text x="0" y="14" font-family="'Liberation Sans','Noto Sans CJK TC',sans-serif" font-size="13" fill="#585858" textLength="104" lengthAdjust="spacingAndGlyphs">您的電子錢幣為：</text></svg><span style="position:absolute;left:105.5px;top:2px;font-size:12.4px;line-height:16px;color:#5a5a5a">10</span></p>
</div>
<div id="footer">
<a class="l" href="#" style="left:-0.3px">Home</a><i class="sep" style="left:44px"></i>
<a href="#" style="position:absolute;left:55.4px;top:1.6px" aria-label="hi，d使用者"><svg class="" width="73" height="18" viewBox="0 0 67 18" role="img" aria-label="hi，d使用者"><title>hi，d使用者</title><text x="0.3" y="12.6" font-family="'Liberation Sans','Noto Sans CJK TC',sans-serif" font-size="12.4" fill="#fff" textLength="66" lengthAdjust="spacingAndGlyphs">hi，d使用者</text><rect x="0" y="14" width="69" height="1" fill="#fff"/></svg></a><i class="sep" style="left:135px"></i>
<a href="#" style="position:absolute;left:145px;top:1.6px" aria-label="[登出]"><svg class="" width="32.1" height="18" viewBox="0 0 32.1 18" role="img" aria-label="[登出]"><title>[登出]</title><text x="0.3" y="12.6" font-family="'Liberation Sans','Noto Sans CJK TC',sans-serif" font-size="12.4" fill="#fff" textLength="31.4" lengthAdjust="spacingAndGlyphs">[登出]</text><rect x="0" y="14" width="32.1" height="1" fill="#fff"/></svg></a><i class="sep" style="left:186px"></i>
<div class="r" style="left:1809.5px;top:1px"><svg class="" width="100.2" height="18" viewBox="0 0 100.2 18" role="img" aria-label="中原大學 畢業專題"><title>中原大學 畢業專題</title><text x="0.3" y="13" font-family="'Liberation Sans','Noto Sans CJK TC',sans-serif" font-size="12" fill="#fff" textLength="99.6" lengthAdjust="spacingAndGlyphs">中原大學 畢業專題</text></svg></div>
<div class="r" style="left:1770.5px;top:21px"><svg class="" width="135.6" height="18" viewBox="0 0 135.6 18" role="img" aria-label="中北路200號 2013-12-10"><title>中北路200號 2013-12-10</title><text x="0.3" y="13" font-family="'Liberation Sans','Noto Sans CJK TC',sans-serif" font-size="12" fill="#fff" textLength="135" lengthAdjust="spacingAndGlyphs">中北路200號 2013-12-10</text></svg></div>
</div>
</body></html>
